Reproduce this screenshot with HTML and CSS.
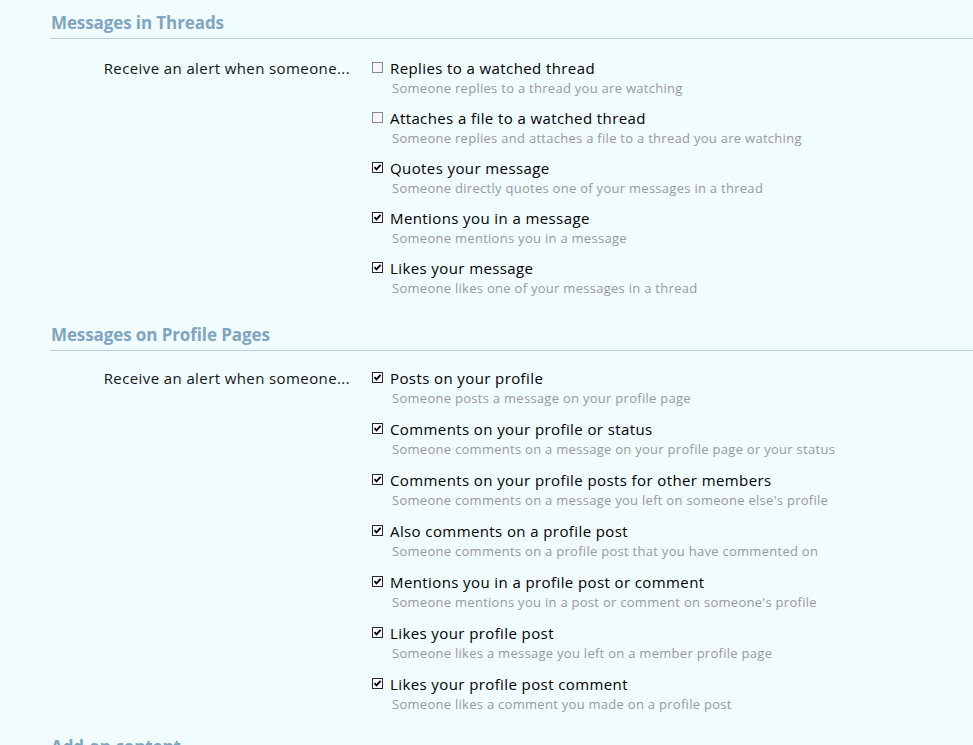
FILE: index.html
```html
<html>
<head>
	<link rel="stylesheet" href="styles.css">
	<title>Alert Preferences</title>
</head>
<body>
	<div class="section">
		<h3 class="sectionHeader">Messages in Threads</h3>
		<div class="ctrlUnit">
			<div class="ctrlLabel">Receive an alert when someone...</div>
			<ul class="checkList">
				<li>
					<div class="option"><span class="box"></span>Replies to a watched thread</div>
					<div class="explain">Someone replies to a thread you are watching</div>
				</li>
				<li>
					<div class="option"><span class="box"></span>Attaches a file to a watched thread</div>
					<div class="explain">Someone replies and attaches a file to a thread you are watching</div>
				</li>
				<li>
					<div class="option"><span class="box checked"><svg viewBox="0 0 9 9"><path d="M1.5 4.2 L3.5 6.4 L7.6 1.8" /></svg></span>Quotes your message</div>
					<div class="explain">Someone directly quotes one of your messages in a thread</div>
				</li>
				<li>
					<div class="option"><span class="box checked"><svg viewBox="0 0 9 9"><path d="M1.5 4.2 L3.5 6.4 L7.6 1.8" /></svg></span>Mentions you in a message</div>
					<div class="explain">Someone mentions you in a message</div>
				</li>
				<li>
					<div class="option"><span class="box checked"><svg viewBox="0 0 9 9"><path d="M1.5 4.2 L3.5 6.4 L7.6 1.8" /></svg></span>Likes your message</div>
					<div class="explain">Someone likes one of your messages in a thread</div>
				</li>
			</ul>
		</div>
	</div>

	<div class="section">
		<h3 class="sectionHeader">Messages on Profile Pages</h3>
		<div class="ctrlUnit">
			<div class="ctrlLabel">Receive an alert when someone...</div>
			<ul class="checkList">
				<li>
					<div class="option"><span class="box checked"><svg viewBox="0 0 9 9"><path d="M1.5 4.2 L3.5 6.4 L7.6 1.8" /></svg></span>Posts on your profile</div>
					<div class="explain">Someone posts a message on your profile page</div>
				</li>
				<li>
					<div class="option"><span class="box checked"><svg viewBox="0 0 9 9"><path d="M1.5 4.2 L3.5 6.4 L7.6 1.8" /></svg></span>Comments on your profile or status</div>
					<div class="explain">Someone comments on a message on your profile page or your status</div>
				</li>
				<li>
					<div class="option"><span class="box checked"><svg viewBox="0 0 9 9"><path d="M1.5 4.2 L3.5 6.4 L7.6 1.8" /></svg></span>Comments on your profile posts for other members</div>
					<div class="explain">Someone comments on a message you left on someone else's profile</div>
				</li>
				<li>
					<div class="option"><span class="box checked"><svg viewBox="0 0 9 9"><path d="M1.5 4.2 L3.5 6.4 L7.6 1.8" /></svg></span>Also comments on a profile post</div>
					<div class="explain">Someone comments on a profile post that you have commented on</div>
				</li>
				<li>
					<div class="option"><span class="box checked"><svg viewBox="0 0 9 9"><path d="M1.5 4.2 L3.5 6.4 L7.6 1.8" /></svg></span>Mentions you in a profile post or comment</div>
					<div class="explain">Someone mentions you in a post or comment on someone's profile</div>
				</li>
				<li>
					<div class="option"><span class="box checked"><svg viewBox="0 0 9 9"><path d="M1.5 4.2 L3.5 6.4 L7.6 1.8" /></svg></span>Likes your profile post</div>
					<div class="explain">Someone likes a message you left on a member profile page</div>
				</li>
				<li>
					<div class="option"><span class="box checked"><svg viewBox="0 0 9 9"><path d="M1.5 4.2 L3.5 6.4 L7.6 1.8" /></svg></span>Likes your profile post comment</div>
					<div class="explain">Someone likes a comment you made on a profile post</div>
				</li>
			</ul>
		</div>
	</div>

	<div class="section">
		<h3 class="sectionHeader">Add-on content</h3>
	</div>
</body>
</html>
```

FILE: styles.css
```css
body {
	margin: 0;
	background-color: #f0fcff;
	font-family: 'Open Sans', sans-serif;
	color: #141414;
}

.section {
	margin-left: 50px;
}

.sectionHeader {
	margin: 17px 0 0 0;
	padding: 0 0 5px 1px;
	font-size: 17px;
	line-height: 20px;
	font-weight: bold;
	letter-spacing: -0.1px;
	color: #7fa5c0;
	border-bottom: 1px solid #bccfe0;
}

.section:first-child .sectionHeader {
	margin-top: 13px;
}

.section:last-child .sectionHeader {
	margin-top: 12px;
}

.ctrlUnit {
	display: flex;
	margin-top: 17px;
}

.section:first-child .ctrlUnit {
	margin-top: 19px;
}

.ctrlLabel {
	width: 300px;
	text-align: right;
	font-size: 15px;
	line-height: 20px;
	letter-spacing: 0.4px;
}

.checkList {
	list-style: none;
	margin: 0 0 0 22px;
	padding: 0;
}

.checkList li {
	margin-bottom: 11px;
}

.section:first-child .checkList li {
	margin-bottom: 10px;
}

.option {
	display: flex;
	align-items: center;
	font-size: 15px;
	line-height: 20px;
	letter-spacing: 0.4px;
	color: #000;
}

.box {
	display: flex;
	width: 9px;
	height: 9px;
	border: 1px solid #8a8a8a;
	background: #f6f6f6;
	margin: -2px 7px 0 0;
}

.box.checked {
	border-color: #2a2a2a;
	background: #fff;
}

.box svg {
	width: 9px;
	height: 9px;
}

.box path {
	fill: none;
	stroke: #000;
	stroke-width: 1.8;
}

.explain {
	margin-left: 20px;
	font-size: 13px;
	line-height: 20px;
	letter-spacing: 0.28px;
	color: #999;
}
```
